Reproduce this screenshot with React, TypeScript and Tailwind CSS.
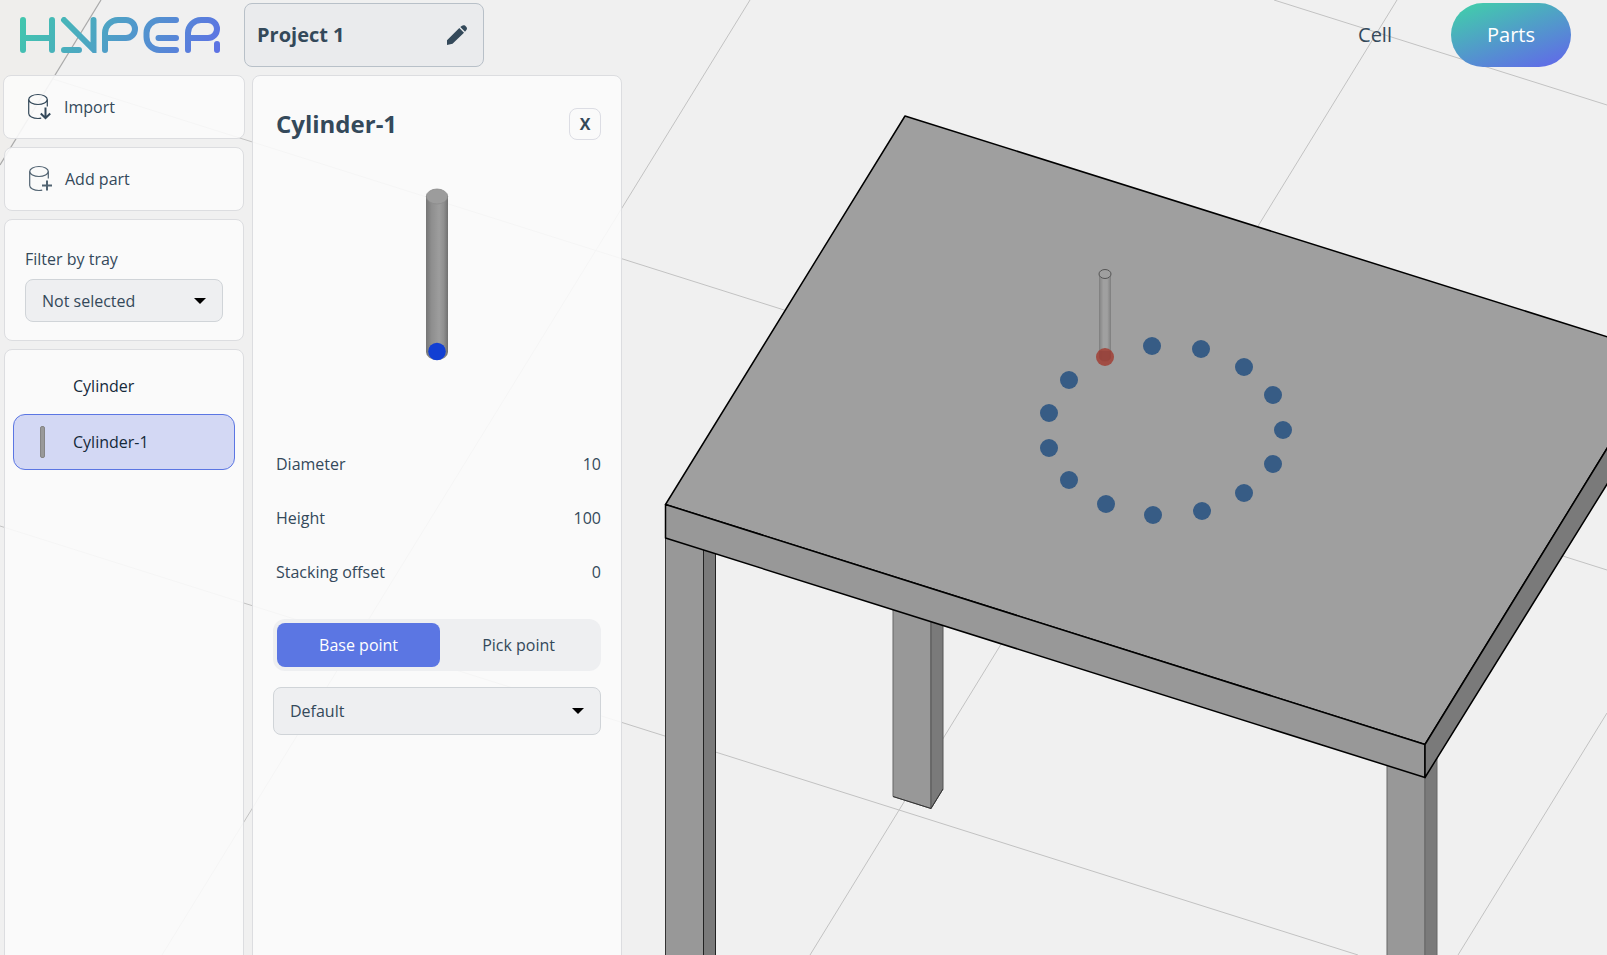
import { useState, type ReactNode } from "react";

const gridLines = [
  [53, 79, 1607, 570],
  [0, 526, 1358, 955],
  [1274, 0, 1607, 105],
  [750, 0, 162, 955],
  [1397, 0, 810, 955],
  [1607, 713, 1458, 955],
];

const trayPoints = [
  [1152, 346], [1201, 349], [1244, 367], [1273, 395], [1283, 430],
  [1273, 464], [1244, 493], [1202, 511], [1153, 515], [1106, 504],
  [1069, 480], [1049, 448], [1049, 413], [1069, 380],
];

function Scene() {
  return (
    <svg
      className="absolute inset-0 h-full w-full"
      viewBox="0 0 1607 955"
      preserveAspectRatio="xMinYMin slice"
      aria-hidden="true"
    >
      <defs>
        <linearGradient id="rod">
          <stop offset="0" stopColor="#858585" />
          <stop offset=".35" stopColor="#a0a0a0" />
          <stop offset=".7" stopColor="#a0a0a0" />
          <stop offset="1" stopColor="#838383" />
        </linearGradient>
      </defs>
      <rect width="1607" height="955" fill="#f0f0f0" />
      <path d="M0 0H101L0 165Z" fill="#efeeec" />
      <path d="M101 0L0 165" stroke="#a9a9a9" strokeWidth="1.2" />
      {gridLines.map(([x1, y1, x2, y2]) => (
        <line key={`${x1}-${y1}`} x1={x1} y1={y1} x2={x2} y2={y2} stroke="#c2c2c2" strokeWidth="1" />
      ))}
      <g strokeWidth="1">
        <path d="M893 600V796.5L931 808.5V600Z" fill="#989898" stroke="#666" />
        <path d="M931 600V808.5L943 789V600Z" fill="#7a7a7a" stroke="#555" />
        <path d="M893 796.5L931 808.5L943 789" fill="none" stroke="#333" />
        <path d="M1387 740V960H1425V740Z" fill="#989898" stroke="#666" />
        <path d="M1425 740V960H1437V740Z" fill="#7a7a7a" stroke="#666" />
        <path d="M665.5 530V960H703.5V530Z" fill="#989898" stroke="#333" />
        <path d="M703.5 530V960H715.5V530Z" fill="#7a7a7a" stroke="#222" />
      </g>
      <g stroke="#000" strokeWidth="1.5" strokeLinejoin="round">
        <path d="M905 116L1627 343V416L1425 744.5L665.5 504.5Z" fill="#9f9f9f" />
        <path d="M665.5 504.5V538L1425 777.5V744.5Z" fill="#989898" />
        <path d="M1425 744.5V777.5L1627 452V416Z" fill="#7a7a7a" />
      </g>
      {trayPoints.map(([cx, cy]) => (
        <circle key={`${cx}-${cy}`} cx={cx} cy={cy} r="9" fill="#375c85" />
      ))}
      <path d="M1099.5 274V357a5.5 4.5 0 0 0 11 0V274Z" fill="url(#rod)" stroke="#7e7e7e" strokeWidth=".8" />
      <ellipse cx="1105" cy="274" rx="6" ry="4.5" fill="#9f9f9f" stroke="#555" />
      <circle cx="1105" cy="357" r="9" fill="#a1443a" fillOpacity="0.9" />
      <path d="M1099 351V357a6 4 0 0 0 12 0V351Z" fill="#8f4039" fillOpacity="0.5" />
    </svg>
  );
}

function Logo() {
  return (
    <svg width="200" height="36" viewBox="20 17 200 36" role="img" aria-label="Hyper">
      <defs>
        <linearGradient id="brand" gradientUnits="userSpaceOnUse" x1="40" y1="-15" x2="205" y2="75">
          <stop offset="0" stopColor="#42c6ae" />
          <stop offset="1" stopColor="#5d72e4" />
        </linearGradient>
      </defs>
      <g fill="none" stroke="url(#brand)" strokeWidth="6" strokeLinecap="round">
        <path d="M23 20V50M52 20V50M23 38H52" />
        <path d="M64 20L93.5 49.5V20M64 50H79" />
        <path d="M105 50V33a13 13 0 0 1 13-13h8a9 9 0 0 1 0 18H105" />
        <path d="M176 20H159.500a13 13 0 0 0-13 13v4a13 13 0 0 0 13 13H176M158.500 38H176" />
        <path d="M188 50V33a13 13 0 0 1 13-13h7a9 9 0 0 1 0 18H188M217 44V50" />
      </g>
    </svg>
  );
}

function DrumIcon({ children, className }: { children: ReactNode; className?: string }) {
  return (
    <svg className={className} width="24" height="28" viewBox="0 0 24 28" fill="none" stroke="currentColor" aria-hidden="true">
      <ellipse cx="10" cy="6.500" rx="9.300" ry="5" strokeWidth="1.200" />
      <path d="M.7 6.500V20.500c0 2.800 4.100 5 9.300 5 1.200 0 2.200-.1 3.200-.4M19.300 6.500V13.500" strokeWidth="1.200" />
      {children}
    </svg>
  );
}

const card = "rounded-lg border border-[#dcdde0] bg-[#fbfbfb]/90";

function Dropdown({ id, label, option, size }: { id: string; label?: string; option: string; size: string }) {
  return (
    <div className="relative">
      <select
        id={id}
        aria-label={label}
        className={`${size} block w-full appearance-none rounded-lg border border-[#d0d4d8] bg-[#eeeff1] px-4`}
      >
        <option>{option}</option>
      </select>
      <svg className="pointer-events-none absolute top-1/2 right-4 -translate-y-1/2" width="13" height="6" viewBox="0 0 13 6" aria-hidden="true">
        <path d="M0 0H12L6 6Z" fill="#000" />
      </svg>
    </div>
  );
}

function Property({ name, value }: { name: string; value: string }) {
  return (
    <div className="flex h-[54px] items-center justify-between">
      <dt>{name}</dt>
      <dd>{value}</dd>
    </div>
  );
}

function PartPreview() {
  return (
    <svg className="mx-auto block" width="24" height="174" viewBox="0 0 24 174" role="img" aria-label="Cylinder-1 preview">
      <defs>
        <linearGradient id="steel">
          <stop offset="0" stopColor="#757575" />
          <stop offset=".25" stopColor="#8e8e8e" />
          <stop offset=".6" stopColor="#9d9d9d" />
          <stop offset=".8" stopColor="#909090" />
          <stop offset="1" stopColor="#707070" />
        </linearGradient>
      </defs>
      <path d="M1 8V164a11 8 0 0 0 22 0V8Z" fill="url(#steel)" />
      <ellipse cx="12" cy="8.500" rx="10.700" ry="7.500" fill="#9c9c9c" stroke="#8c8c8c" strokeWidth=".8" />
      <circle cx="12" cy="163.500" r="8.800" fill="#123fd3" />
    </svg>
  );
}

export default function App() {
  const [point, setPoint] = useState("Base point");

  return (
    <div className="relative flex h-screen flex-col overflow-hidden bg-[#f0f0f0] font-['Open_Sans',sans-serif] text-base text-[#34495a]">
      <Scene />

      <header className="relative flex items-center py-[3px] pr-9 pl-5">
        <Logo />
        <div className="ml-6 flex h-16 w-60 items-center justify-between rounded-lg border border-[#b8c0c8] bg-[#eaebed] pr-4 pl-3">
          <span className="text-xl font-bold">Project 1</span>
          <button type="button" aria-label="Rename project">
            <svg width="20" height="20" viewBox="0 0 20 20" fill="currentColor" aria-hidden="true">
              <path d="M0 20V15.300L12.300 3 17 7.700 5.500 18.800ZM13.300 2 15 .7C16 0 17 0 18 .6L19.400 2c.8 1 .8 2 0 3L18 6.700Z" />
            </svg>
          </button>
        </div>
        <nav className="ml-auto flex gap-4 text-xl">
          <button type="button" className="h-16 w-[120px]">Cell</button>
          <button
            type="button"
            className="h-16 w-[120px] rounded-full bg-[linear-gradient(160deg,#43c8ae_10%,#5f6fe5_90%)] text-white"
          >
            Parts
          </button>
        </nav>
      </header>

      <main className="relative flex min-h-0 flex-1 gap-2 pt-[5px] pl-1">
        <aside className="flex w-60 flex-col gap-2">
          <button type="button" className={`${card} -mx-px flex h-16 shrink-0 items-center gap-3 px-6`}>
            <DrumIcon>
              <path d="M17.500 14.500V25M12.800 20.500l4.700 4.700 4.700-4.700" strokeWidth="2" />
            </DrumIcon>
            Import
          </button>
          <button type="button" className={`${card} flex h-16 shrink-0 items-center gap-3 px-6`}>
            <DrumIcon className="opacity-85">
              <path d="M18 15.500V25.500M13 20.500H23" strokeWidth="2" />
            </DrumIcon>
            Add part
          </button>
          <div className={`${card} flex h-[122px] shrink-0 flex-col justify-end gap-2 px-5 pb-[18px]`}>
            <label htmlFor="tray">Filter by tray</label>
            <Dropdown id="tray" option="Not selected" size="h-[43px]" />
          </div>
          <ul className={`${card} -mb-3 flex-1 p-2 text-[#14293a]`}>
            <li>
              <button type="button" className="flex h-14 w-full items-center pl-[60px]">Cylinder</button>
            </li>
            <li>
              <button
                type="button"
                className="flex h-14 w-full items-center rounded-xl border border-[#5b76e3] bg-[#d3d8f4] pl-[26px]"
              >
                <span className="mr-7 h-8 w-[5px] rounded-xs border border-[#858585] bg-[#999]" />
                Cylinder-1
              </button>
            </li>
          </ul>
        </aside>

        <section className={`${card} -mb-3 w-[370px] px-5 pt-8`}>
          <div className="flex items-center justify-between pl-[3px]">
            <h1 className="text-2xl font-bold">Cylinder-1</h1>
            <button type="button" aria-label="Close" className="size-8 rounded-lg border border-[#dcdde4] text-base font-bold">
              X
            </button>
          </div>
          <div className="h-[297px] pt-12">
            <PartPreview />
          </div>
          <dl className="pl-[3px]">
            <Property name="Diameter" value="10" />
            <Property name="Height" value="100" />
            <Property name="Stacking offset" value="0" />
          </dl>
          <div className="mt-5 grid grid-cols-[51%_49%] rounded-xl bg-[#eeeff1] p-1">
            {["Base point", "Pick point"].map((name) => (
              <button
                key={name}
                type="button"
                aria-pressed={point === name}
                onClick={() => setPoint(name)}
                className={`h-11 rounded-lg ${point === name ? "bg-[#5b76e3] text-white" : ""}`}
              >
                {name}
              </button>
            ))}
          </div>
          <div className="mt-4">
            <Dropdown id="point" label="Point" option="Default" size="h-12" />
          </div>
        </section>
      </main>
    </div>
  );
}
